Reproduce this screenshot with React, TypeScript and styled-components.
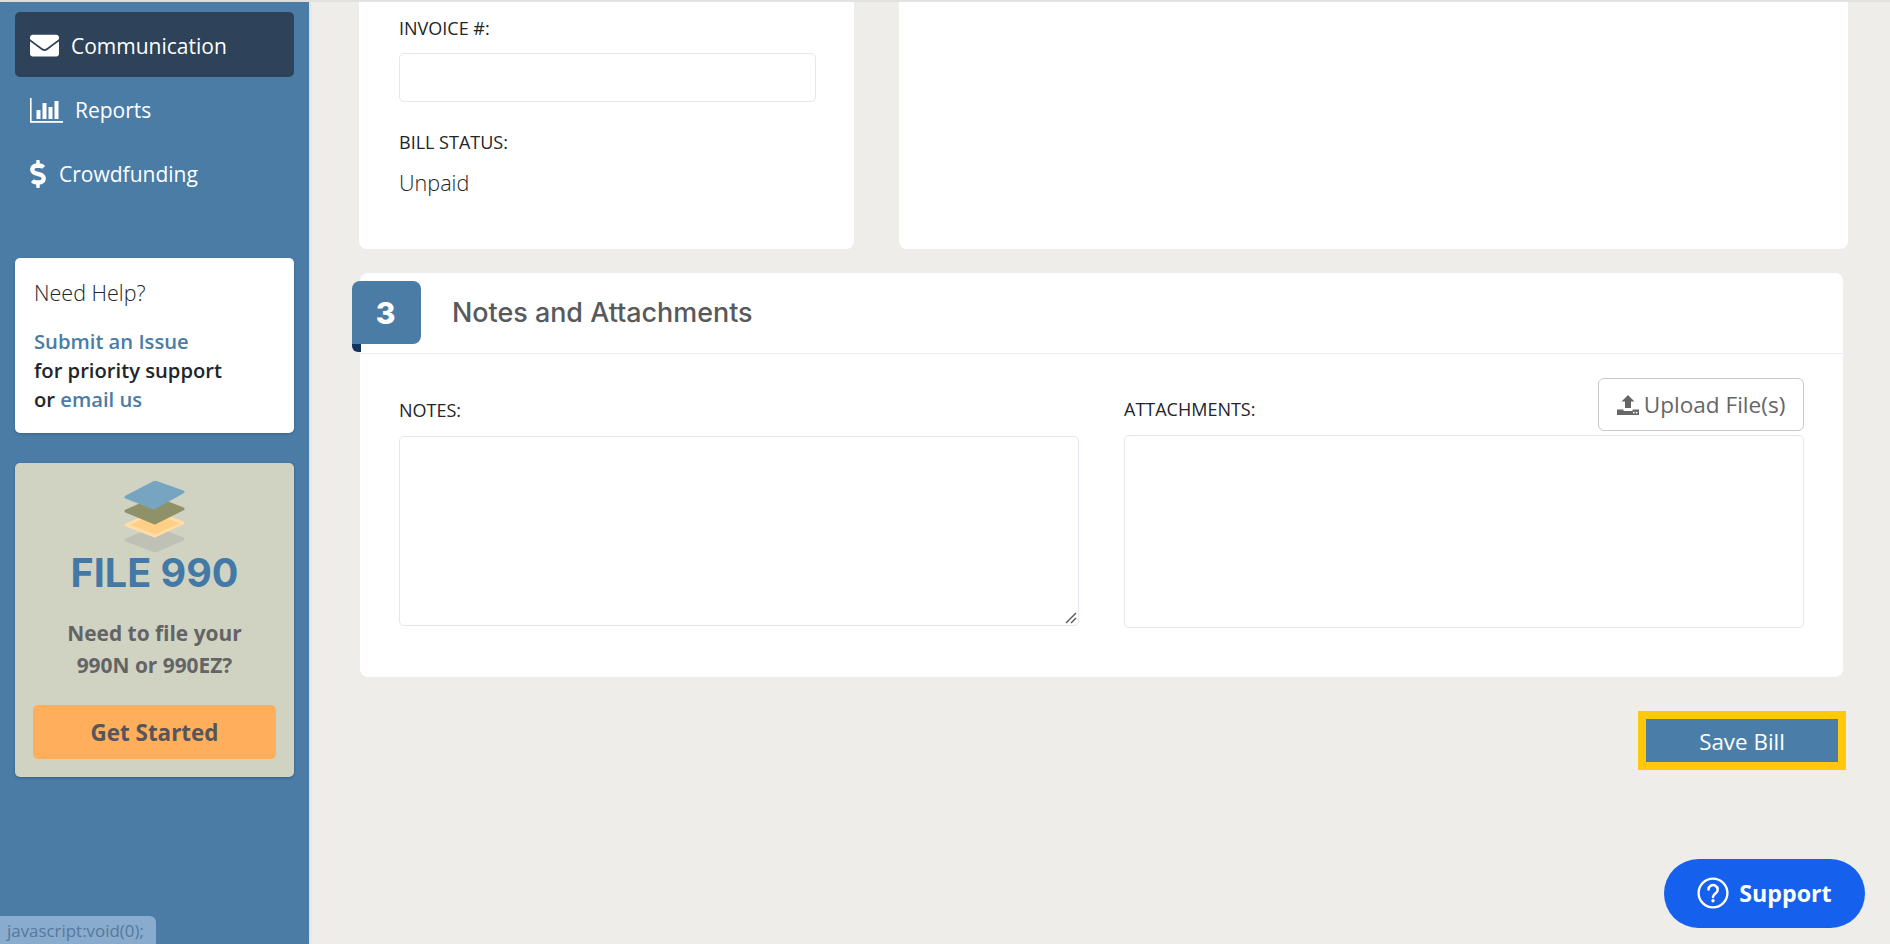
import React from "react";
import styled, { createGlobalStyle } from "styled-components";
import { FaEnvelope, FaDollarSign } from "react-icons/fa";

const Global = createGlobalStyle`
  html, body { margin: 0; padding: 0; height: 100%; overflow: hidden; }
  body { font-family: "Open Sans", "Liberation Sans", sans-serif; background: #eeede9; color: #212529; }
  * { box-sizing: border-box; }
  a { text-decoration: none; }
`;

const Page = styled.div`
  position: relative;
  height: 944px;
  display: flex;
  flex-direction: column;
  overflow: hidden;
`;
const TopLine = styled.div`
  height: 2px;
  flex: none;
  background: #e2e3e0;
`;
const Body = styled.div`
  flex: 1;
  display: flex;
  min-height: 0;
`;
const Sidebar = styled.aside`
  width: 309px;
  flex: none;
  background: #4a7ca6;
  padding: 10px 15px 0;
  box-shadow: 1px 0 3px rgba(0, 0, 0, 0.08);
`;
const NavList = styled.nav`
  display: flex;
  flex-direction: column;
  margin-bottom: 53px;
`;
const NavItem = styled.a<{ $active?: boolean; $gap: number; $h: number }>`
  height: ${(p) => p.$h}px;
  display: flex;
  align-items: center;
  gap: ${(p) => p.$gap}px;
  padding: 2px 0 0 15px;
  border-radius: 5px;
  color: #fff;
  font-size: 21px;
  background: ${(p) => (p.$active ? "#2e4259" : "transparent")};
`;
const DollarGlyph = styled(FaDollarSign)`
  margin-left: -6px;
`;
const HelpCard = styled.section`
  height: 175px;
  background: #fff;
  border-radius: 5px;
  padding: 20px 19px 0;
  box-shadow: 0 1px 3px rgba(0, 0, 0, 0.2);
  margin-bottom: 30px;
`;
const HelpTitle = styled.div`
  font-size: 21.5px;
  font-weight: 300;
  line-height: 29px;
  margin-bottom: 20px;
  color: #212529;
`;
const HelpLine = styled.div`
  font-size: 20.2px;
  font-weight: 600;
  line-height: 29px;
  color: #212529;
`;
const HelpLink = styled.a`
  color: #4a7ca6;
`;
const PromoCard = styled.section`
  height: 314px;
  background: #d1d3c2;
  border-radius: 5px;
  padding: 18px 18px 0;
  box-shadow: 0 1px 3px rgba(0, 0, 0, 0.25);
  display: flex;
  flex-direction: column;
  align-items: center;
`;
const PromoTitle = styled.div`
  font-family: "Inter", "Liberation Sans", sans-serif;
  font-weight: 700;
  font-size: 39.5px;
  line-height: 42px;
  color: #4379a6;
  margin: -1px 0 23px;
`;
const PromoText = styled.div`
  font-weight: 700;
  font-size: 20.9px;
  line-height: 32px;
  color: #636466;
  text-align: center;
  margin-bottom: 24px;
`;
const PromoButton = styled.a`
  width: 243px;
  height: 54px;
  flex: none;
  border-radius: 5px;
  background: #ffae5c;
  color: #555659;
  font-size: 22.4px;
  font-weight: 700;
  display: flex;
  align-items: center;
  justify-content: center;
`;
const Main = styled.main`
  flex: 1;
  min-width: 0;
  padding: 0 47px 0 50px;
  display: flex;
  flex-direction: column;
`;
const TopRow = styled.div`
  display: flex;
  gap: 45px;
  margin-right: -5px;
  margin-bottom: 24px;
`;
const TopCard = styled.section<{ $w?: number }>`
  height: 247px;
  background: #fff;
  border-radius: 0 0 8px 8px;
  flex: ${(p) => (p.$w ? `0 0 ${p.$w}px` : "1")};
  padding: 15px 38px 0 40px;
`;
const Label = styled.label`
  display: block;
  font-size: 18px;
  line-height: 22px;
  color: #212529;
`;
const TextInput = styled.div`
  height: 49px;
  margin-top: 14px;
  margin-bottom: 29px;
  border: 1px solid #e2e7f0;
  border-radius: 5px;
  background: #fff;
`;
const Value = styled.div`
  font-size: 21.6px;
  font-weight: 300;
  line-height: 26px;
  margin-top: 17px;
  color: #212529;
`;
const NotesCard = styled.section`
  margin-left: 1px;
  height: 404px;
  background: #fff;
  border-radius: 8px;
  display: flex;
  flex-direction: column;
`;
const CardHeader = styled.header`
  height: 81px;
  flex: none;
  border-bottom: 1px solid #ebedf0;
  display: flex;
  align-items: flex-start;
  padding-top: 8px;
`;
const StepBadge = styled.div`
  position: relative;
  width: 69px;
  height: 63px;
  margin-left: -8px;
  flex: none;
  background: #4a7ca6;
  border-radius: 8px 8px 8px 0;
  color: #fff;
  font-family: "Inter", "Liberation Sans", sans-serif;
  font-weight: 800;
  font-size: 30px;
  display: flex;
  align-items: center;
  justify-content: center;
  padding-right: 2px;
  &::after {
    content: "";
    position: absolute;
    left: 0;
    top: 63px;
    width: 9px;
    height: 8px;
    background: #14335f;
    border-radius: 0 0 0 6px;
  }
`;
const CardTitle = styled.h2`
  margin: 0 0 0 31px;
  font-family: "Inter", "Liberation Sans", sans-serif;
  font-weight: 500;
  font-size: 26.9px;
  line-height: 63px;
  color: #58595b;
`;
const Columns = styled.div`
  display: flex;
  gap: 45px;
  padding: 24px 39px 0;
`;
const Column = styled.div`
  flex: 1;
  min-width: 0;
`;
const FieldHead = styled.div`
  height: 58px;
  display: flex;
  justify-content: space-between;
  align-items: flex-start;
`;
const HeadLabel = styled(Label)<{ $top: number }>`
  margin-top: ${(p) => p.$top}px;
`;
const UploadButton = styled.button`
  width: 206px;
  height: 53px;
  border: 1px solid #c9c9c9;
  border-radius: 6px;
  background: #fff;
  color: #666;
  font-family: inherit;
  font-size: 22.6px;
  display: flex;
  align-items: center;
  justify-content: center;
  gap: 5px;
  padding: 0;
`;
const NotesWrap = styled.div`
  position: relative;
  height: 190px;
`;
const TextArea = styled.textarea`
  display: block;
  width: 100%;
  height: 100%;
  border: 1px solid #e2e7f0;
  border-radius: 5px;
  background: #fff;
  outline: none;
  resize: none;
`;
const ResizeGrip = styled.svg`
  position: absolute;
  right: 2px;
  bottom: 2px;
`;
const AttachBox = styled.div`
  height: 193px;
  border: 1px solid #e2e7f0;
  border-radius: 5px;
  margin-top: -1px;
`;
const Actions = styled.div`
  display: flex;
  justify-content: flex-end;
  margin-top: 34px;
  margin-right: -3px;
`;
const SaveButton = styled.button`
  width: 208px;
  height: 59px;
  border: 8px solid #ffc80a;
  background: #4a7ea8;
  color: #fff;
  font-family: inherit;
  font-size: 22.4px;
  padding: 2px 0 0;
`;
const SupportButton = styled.button`
  position: absolute;
  left: 1664px;
  top: 859px;
  width: 201px;
  height: 69px;
  border: none;
  border-radius: 35px;
  background: #1660ee;
  color: #fff;
  font-family: "Open Sans", sans-serif;
  font-size: 23.2px;
  font-weight: 700;
  display: flex;
  align-items: center;
  justify-content: center;
  gap: 10px;
  padding: 0 0 2px;
`;
const StatusTip = styled.div`
  position: absolute;
  left: 0;
  bottom: 0;
  width: 156px;
  height: 28px;
  background: #88abce;
  border-radius: 0 6px 0 0;
  color: #56799c;
  font-size: 16.9px;
  line-height: 30px;
  padding-left: 7px;
  white-space: nowrap;
`;

const ChartIcon = () => (
  <svg width="33" height="25" viewBox="0 0 33 25" fill="#fff">
    <rect x="0" y="0" width="1.6" height="24" />
    <rect x="0" y="23" width="33" height="1.8" />
    <rect x="6.5" y="12" width="4" height="9" />
    <rect x="12.5" y="5" width="4" height="16" />
    <rect x="18.5" y="9" width="4" height="12" />
    <rect x="24.5" y="3" width="4" height="18" />
  </svg>
);

const StackIcon = () => (
  <svg width="62" height="72" viewBox="0 0 62 72" style={{ display: "block" }}>
    <path d="M33 49l28 11-28 12-29-11z" transform="translate(-2 -2)" fill="#bfc1b4" stroke="#bfc1b4" strokeWidth="3" strokeLinejoin="round" />
    <path d="M33 33l28 11-28 13-29-11z" transform="translate(-2 -2)" fill="#ffcf85" stroke="#ffdca8" strokeWidth="3" strokeLinejoin="round" />
    <path d="M33 19l28 11-28 14-29-12z" transform="translate(-2 -2)" fill="#8f9268" stroke="#8f9268" strokeWidth="3" strokeLinejoin="round" />
    <path d="M33 3l28 10-29 16L4 18z" transform="translate(-2 -2)" fill="#77a5c1" stroke="#77a5c1" strokeWidth="3" strokeLinejoin="round" />
  </svg>
);

const UploadIcon = () => (
  <svg width="22" height="20" viewBox="0 0 22 20" fill="#666">
    <path d="M11 0l6.5 6.5H14V13H8V6.500H4.500z" />
    <path d="M0 14.500h6.500v1.500h9v-1.500H22V20H0z" />
    <rect x="16" y="16.800" width="1.600" height="1.600" fill="#fff" />
    <rect x="18.800" y="16.800" width="1.600" height="1.600" fill="#fff" />
  </svg>
);

const HelpIcon = () => (
  <svg width="32" height="32" viewBox="0 0 30 30" fill="none">
    <circle cx="15" cy="15" r="13.500" stroke="#fff" strokeWidth="2.200" />
    <path d="M10.800 11.800a4.300 4.300 0 1 1 6.600 3.600c-1.500 1-2.400 1.700-2.400 3.400" stroke="#fff" strokeWidth="2.400" strokeLinecap="round" />
    <circle cx="15" cy="22.300" r="1.600" fill="#fff" />
  </svg>
);

export default function App() {
  return (
    <Page>
      <Global />
      <TopLine />
      <Body>
        <Sidebar>
          <NavList>
            <NavItem $active $gap={12} $h={65} href="#">
              <FaEnvelope size={29} />
              Communication
            </NavItem>
            <NavItem $gap={12} $h={64} href="#">
              <ChartIcon />
              Reports
            </NavItem>
            <NavItem $gap={7} $h={64} href="#">
              <DollarGlyph size={28} />
              Crowdfunding
            </NavItem>
          </NavList>
          <HelpCard>
            <HelpTitle>Need Help?</HelpTitle>
            <HelpLine><HelpLink>Submit an Issue</HelpLink></HelpLine>
            <HelpLine>for priority support</HelpLine>
            <HelpLine>or <HelpLink>email us</HelpLink></HelpLine>
          </HelpCard>
          <PromoCard>
            <StackIcon />
            <PromoTitle>FILE 990</PromoTitle>
            <PromoText>Need to file your<br />990N or 990EZ?</PromoText>
            <PromoButton>Get Started</PromoButton>
          </PromoCard>
        </Sidebar>
        <Main>
          <TopRow>
            <TopCard $w={495}>
              <Label>INVOICE #:</Label>
              <TextInput />
              <Label>BILL STATUS:</Label>
              <Value>Unpaid</Value>
            </TopCard>
            <TopCard />
          </TopRow>
          <NotesCard>
            <CardHeader>
              <StepBadge>3</StepBadge>
              <CardTitle>Notes and Attachments</CardTitle>
            </CardHeader>
            <Columns>
              <Column>
                <FieldHead>
                  <HeadLabel $top={21}>NOTES:</HeadLabel>
                </FieldHead>
                <NotesWrap>
                  <TextArea />
                  <ResizeGrip width="12" height="12" viewBox="0 0 12 12" stroke="#555" strokeWidth="1.400">
                    <path d="M1 11L11 1M6 11l5-5" />
                  </ResizeGrip>
                </NotesWrap>
              </Column>
              <Column>
                <FieldHead>
                  <HeadLabel $top={20}>ATTACHMENTS:</HeadLabel>
                  <UploadButton><UploadIcon />Upload File(s)</UploadButton>
                </FieldHead>
                <AttachBox />
              </Column>
            </Columns>
          </NotesCard>
          <Actions>
            <SaveButton>Save Bill</SaveButton>
          </Actions>
        </Main>
      </Body>
      <SupportButton><HelpIcon />Support</SupportButton>
      <StatusTip>javascript:void(0);</StatusTip>
    </Page>
  );
}
